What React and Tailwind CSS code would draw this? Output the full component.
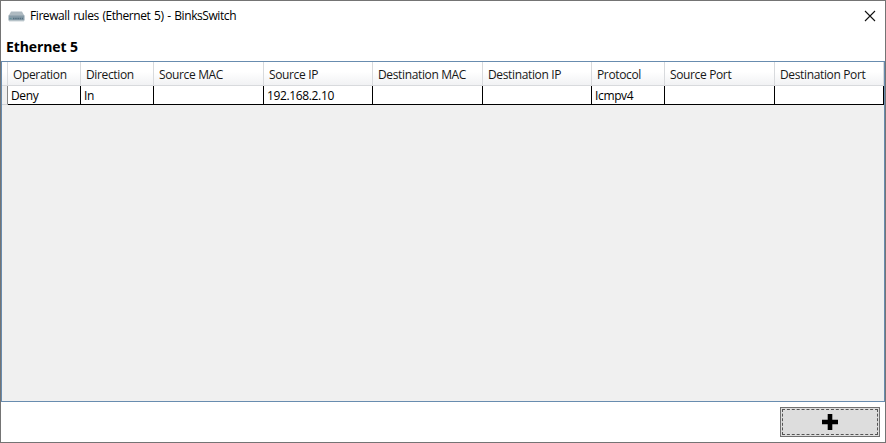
const columns = [
  { name: 'Operation', value: 'Deny', width: 'w-[73px]' },
  { name: 'Direction', value: 'In', width: 'w-[73px]' },
  { name: 'Source MAC', value: '', width: 'w-[110px]' },
  { name: 'Source IP', value: '192.168.2.10', width: 'w-[109px]' },
  { name: 'Destination MAC', value: '', width: 'w-[110px]' },
  { name: 'Destination IP', value: '', width: 'w-[109px]' },
  { name: 'Protocol', value: 'Icmpv4', width: 'w-[73px]' },
  { name: 'Source Port', value: '', width: 'w-[110px]' },
  { name: 'Destination Port', value: '', width: 'w-[109px]' },
];

function SwitchIcon() {
  return (
    <svg width="17" height="11" viewBox="0 0 17 11">
      <path d="M3 .5h11L16.5 5H.5z" fill="#aebac1" />
      <path d="M.5 4.5h16v5H.5z" fill="#879ba7" />
      <path d="M1 9.5h15v.8H1z" fill="#a9b6bd" />
      <path d="M5 7.5h10" stroke="#557080" strokeWidth="1.6" strokeDasharray="1.5 .7" />
      <path d="M1.5 7.5h2" stroke="#5f9098" />
    </svg>
  );
}

export default function App() {
  return (
    <div className="flex h-[443px] w-[886px] flex-col border border-[#747474] bg-white font-['Open_Sans','Noto_Sans',sans-serif] text-[12px] leading-4 text-black">
      <header className="flex h-[30px] shrink-0 items-center pl-[7px]">
        <SwitchIcon />
        <h1 className="ml-[5px] whitespace-nowrap tracking-[-0.42px] [word-spacing:0.9px]">Firewall rules (Ethernet 5) - BinksSwitch</h1>
        <button className="ml-auto mr-[9px]" aria-label="Close">
          <svg width="12" height="12" viewBox="0 0 12 12" fill="none" stroke="#111" strokeWidth="1.1">
            <path d="M1 1l10 10M11 1L1 11" />
          </svg>
        </button>
      </header>
      <h2 className="h-[30px] shrink-0 pl-[5px] pt-[6px] text-[14px] font-bold leading-5 tracking-[-0.1px]">Ethernet 5</h2>
      <main className="h-[341px] shrink-0 border border-[#688caf] bg-[#f0f0f0]">
        <div className="flex h-6 bg-linear-to-b from-white from-40% to-[#f0f1f3] text-[#171717]">
          <div className="w-[6px] border-r border-b border-[#d8dadd]" />
          {columns.map((c) => (
            <div key={c.name} className={`${c.width} shrink-0 whitespace-nowrap border-r border-b border-[#d8dadd] pl-[5px] pt-[5px] tracking-[-0.36px]`}>
              {c.name}
            </div>
          ))}
        </div>
        <div className="flex h-[19px]">
          <div className="w-[6px] border-r border-b border-[#d0d2d5] border-r-[#888]" />
          {columns.map((c) => (
            <div key={c.name} className={`${c.width} shrink-0 whitespace-nowrap border-r border-b border-black bg-white pl-[3px] pt-[2px] tracking-[-0.36px]`}>
              {c.value}
            </div>
          ))}
        </div>
      </main>
      <footer className="flex justify-end pr-[5px] pt-[5px]">
        <button className="h-[30px] w-[100px] border border-[#707070] bg-[#ddd] p-px" aria-label="Add rule">
          <span className="flex h-full items-center justify-center border border-dashed border-[#555]">
            <svg width="16" height="16" viewBox="0 0 16 16">
              <path d="M5.7 0h4.6v5.700h5.700v4.600h-5.700V16H5.700v-5.700H0V5.700h5.700z" fill="#000" />
            </svg>
          </span>
        </button>
      </footer>
    </div>
  );
}
